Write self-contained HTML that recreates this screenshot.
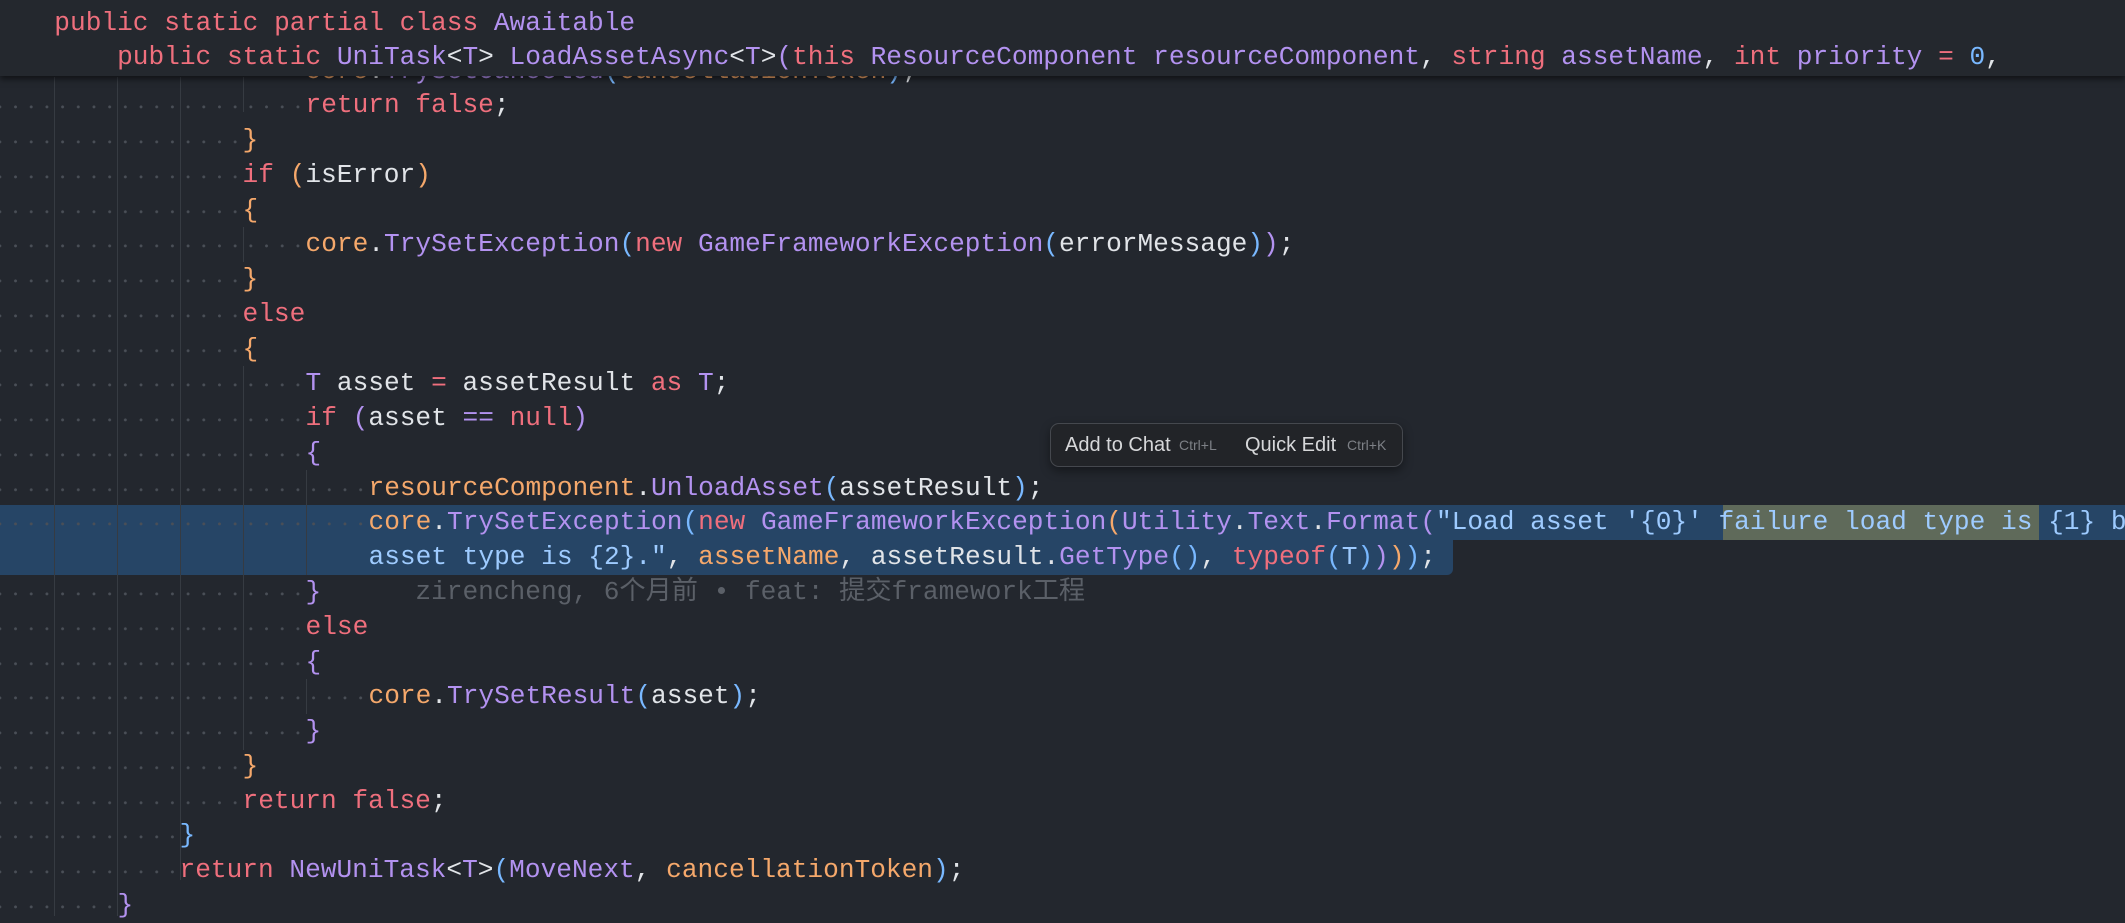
<!DOCTYPE html>
<html><head><meta charset="utf-8"><style>
html,body{margin:0;padding:0;}
body{width:2125px;height:916px;overflow:hidden;background:#23272e;position:relative;font-family:"Liberation Mono","Noto Sans CJK SC",monospace;font-size:26.17px;}
.l{position:absolute;left:-8.5px;height:34.76px;line-height:34.76px;white-space:pre;color:#e1e4e8;}
.d{display:inline-block;height:34.76px;vertical-align:top;background-image:radial-gradient(circle at 50% 54%,#4a4f57 1.2px,transparent 1.7px);background-size:15.7px 34.76px;}
.k{color:#ef6f7d}.p{color:#b392f0}.o{color:#f5a86b}.b{color:#79b8ff}.s{color:#9ecbff}.w{color:#e1e4e8}
.g{position:absolute;width:1px;background:#363b42;}
.sel{position:absolute;background:#264566;}
.hdr{position:absolute;left:0;top:0;width:2125px;height:76px;background:#24282e;box-shadow:0 3px 6px rgba(0,0,0,0.55);z-index:5;}
.blame{color:#5b6068;font-family:"Liberation Mono","Noto Sans CJK SC",monospace;}
.tip{position:absolute;left:1050px;top:423px;width:351px;height:42px;border:1px solid #45484e;border-radius:9px;background:#222428;box-shadow:0 4px 10px rgba(0,0,0,0.4);font-family:"Liberation Sans",sans-serif;z-index:6;}
.tip span{position:absolute;top:0;line-height:42px;}
</style></head><body>

<div class="sel" style="left:0;top:505.4px;width:2125px;height:34.8px;"></div>
<div class="sel" style="left:0;top:540px;width:1453px;height:34.8px;border-radius:0 0 6px 0;"></div>
<div style="position:absolute;left:1723px;top:505.4px;width:316px;height:34.8px;background:#5f6a5a;"></div>

<div class="g" style="left:54px;top:77px;height:839px"></div>
<div class="g" style="left:117px;top:77px;height:839px"></div>
<div class="g" style="left:180px;top:77px;height:803px"></div>
<div class="g" style="left:243px;top:77px;height:35px"></div>
<div class="g" style="left:243px;top:227px;height:35px"></div>
<div class="g" style="left:243px;top:366px;height:384px"></div>
<div class="g" style="left:306px;top:470px;height:105px"></div>
<div class="g" style="left:306px;top:679px;height:35px"></div>

<div class="l" style="top:53.5px"><span class="d" style="width:314px"></span><span class="o">core</span>.<span class="p">TrySetCanceled</span><span class="b">(</span><span class="o">cancellationToken</span><span class="b">)</span>;</div>
<div class="l" style="top:88.3px"><span class="d" style="width:314px"></span><span class="k">return</span> <span class="k">false</span>;</div>
<div class="l" style="top:123.1px"><span class="d" style="width:251px"></span><span class="o">}</span></div>
<div class="l" style="top:157.8px"><span class="d" style="width:251px"></span><span class="k">if</span> <span class="o">(</span>isError<span class="o">)</span></div>
<div class="l" style="top:192.6px"><span class="d" style="width:251px"></span><span class="o">{</span></div>
<div class="l" style="top:227.3px"><span class="d" style="width:314px"></span><span class="o">core</span>.<span class="p">TrySetException</span><span class="b">(</span><span class="k">new</span> <span class="p">GameFrameworkException</span><span class="b">(</span>errorMessage<span class="b">)</span><span class="p">)</span>;</div>
<div class="l" style="top:262.1px"><span class="d" style="width:251px"></span><span class="o">}</span></div>
<div class="l" style="top:296.9px"><span class="d" style="width:251px"></span><span class="k">else</span></div>
<div class="l" style="top:331.6px"><span class="d" style="width:251px"></span><span class="o">{</span></div>
<div class="l" style="top:366.4px"><span class="d" style="width:314px"></span><span class="p">T</span> asset <span class="k">=</span> assetResult <span class="k">as</span> <span class="p">T</span>;</div>
<div class="l" style="top:401.1px"><span class="d" style="width:314px"></span><span class="k">if</span> <span class="p">(</span>asset <span class="p">==</span> <span class="k">null</span><span class="p">)</span></div>
<div class="l" style="top:435.9px"><span class="d" style="width:314px"></span><span class="p">{</span></div>
<div class="l" style="top:470.7px"><span class="d" style="width:377px"></span><span class="o">resourceComponent</span>.<span class="p">UnloadAsset</span><span class="b">(</span>assetResult<span class="b">)</span>;</div>
<div class="l" style="top:505.4px"><span class="d" style="width:377px"></span><span class="o">core</span>.<span class="p">TrySetException</span><span class="b">(</span><span class="k">new</span> <span class="p">GameFrameworkException</span><span class="o">(</span><span class="p">Utility</span>.<span class="p">Text</span>.<span class="p">Format</span><span class="p">(</span><span class="s">"Load asset '{0}' failure load type is {1} but</span></div>
<div class="l" style="top:540.2px"><span style="display:inline-block;width:377px"></span><span class="s">asset type is {2}."</span>, <span class="o">assetName</span>, assetResult.<span class="p">GetType</span><span class="b">()</span>, <span class="k">typeof</span><span class="b">(</span><span class="s">T</span><span class="b">)</span><span class="p">)</span><span class="o">)</span><span class="b">)</span>;</div>
<div class="l" style="top:574.9px"><span class="d" style="width:314px"></span><span class="p">}</span><span class="blame">      zirencheng, 6个月前 • feat: 提交framework工程</span></div>
<div class="l" style="top:609.7px"><span class="d" style="width:314px"></span><span class="k">else</span></div>
<div class="l" style="top:644.5px"><span class="d" style="width:314px"></span><span class="p">{</span></div>
<div class="l" style="top:679.2px"><span class="d" style="width:377px"></span><span class="o">core</span>.<span class="p">TrySetResult</span><span class="b">(</span>asset<span class="b">)</span>;</div>
<div class="l" style="top:714px"><span class="d" style="width:314px"></span><span class="p">}</span></div>
<div class="l" style="top:748.7px"><span class="d" style="width:251px"></span><span class="o">}</span></div>
<div class="l" style="top:783.5px"><span class="d" style="width:251px"></span><span class="k">return</span> <span class="k">false</span>;</div>
<div class="l" style="top:818.3px"><span class="d" style="width:188px"></span><span class="b">}</span></div>
<div class="l" style="top:853px"><span class="d" style="width:188px"></span><span class="k">return</span> <span class="p">NewUniTask</span>&lt;<span class="p">T</span>&gt;<span class="b">(</span><span class="p">MoveNext</span>, <span class="o">cancellationToken</span><span class="b">)</span>;</div>
<div class="l" style="top:887.8px"><span class="d" style="width:126px"></span><span class="p">}</span></div>

<div class="hdr">
<div class="l" style="top:5.6px">    <span class="k">public</span> <span class="k">static</span> <span class="k">partial</span> <span class="k">class</span> <span class="p">Awaitable</span></div>
<div class="l" style="top:39.6px">        <span class="k">public</span> <span class="k">static</span> <span class="p">UniTask</span>&lt;<span class="p">T</span>&gt; <span class="p">LoadAssetAsync</span>&lt;<span class="p">T</span>&gt;<span class="p">(</span><span class="k">this</span> <span class="p">ResourceComponent</span> <span class="p">resourceComponent</span>, <span class="k">string</span> <span class="p">assetName</span>, <span class="k">int</span> <span class="p">priority</span> <span class="k">=</span> <span class="b">0</span>,</div>
</div>

<div class="tip">
<span style="left:14px;font-size:20px;color:#d6d7d9;">Add to Chat</span>
<span style="left:128px;font-size:14px;color:#7d8086;">Ctrl+L</span>
<span style="left:194px;font-size:20px;color:#d6d7d9;">Quick Edit</span>
<span style="left:296px;font-size:14px;color:#7d8086;">Ctrl+K</span>
</div>
</body></html>
